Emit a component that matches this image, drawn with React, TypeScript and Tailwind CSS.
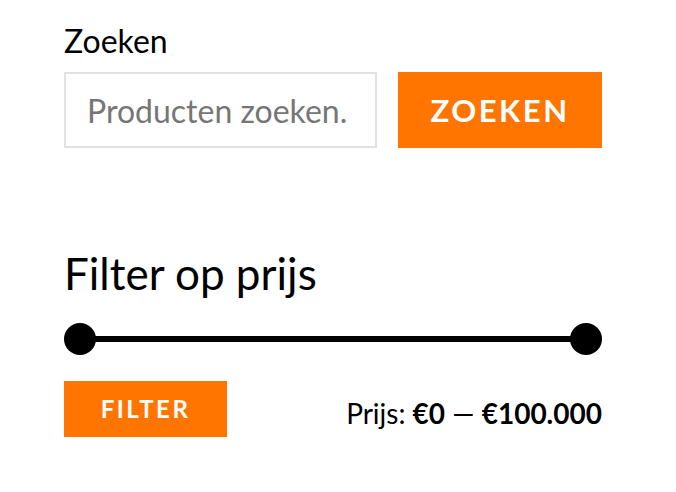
export default function App() {
  return (
    <div className="min-h-screen bg-white pl-16 pt-[22px] font-['Lato',sans-serif] text-black">
      <div className="w-[538px]">
        {/* zoeken */}
        <label className="block text-[32px] leading-[38px]">Zoeken</label>
        <div className="mt-[12px] flex gap-[21px]">
          <input
            type="text"
            placeholder="Producten zoeken."
            className="h-[76px] w-[313px] border-2 border-[#e2e2e2] px-[21px] text-[32px] text-[#333] placeholder:text-[#767676] outline-none"
          />
          <button className="h-[76px] flex-1 bg-[#ff7500] text-[31px] font-bold uppercase tracking-[2.5px] text-white">
            Zoeken
          </button>
        </div>

        {/* filter op prijs */}
        <h2 className="mt-[98px] text-[44px] leading-[54px]">Filter op prijs</h2>
        <div className="relative mt-[23px] h-8">
          <div className="absolute left-4 right-4 top-[13px] h-[6px] bg-black" />
          <div className="absolute left-0 top-0 h-8 w-8 rounded-full bg-black" />
          <div className="absolute right-0 top-0 h-8 w-8 rounded-full bg-black" />
        </div>
        <div className="mt-[26px] flex items-center justify-between">
          <button className="h-[56px] w-[163px] bg-[#ff7500] text-[24px] font-bold uppercase tracking-[2.5px] text-white">
            Filter
          </button>
          <div className="pt-[8px] text-[28px]">
            Prijs: <span className="font-bold">€0</span> — <span className="font-bold">€100.000</span>
          </div>
        </div>
      </div>
    </div>
  );
}
